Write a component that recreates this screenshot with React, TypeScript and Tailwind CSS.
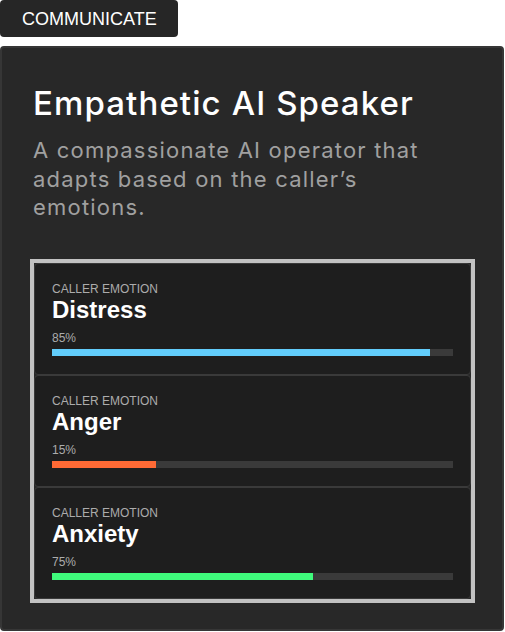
import React from "react";

const rows = [
  { name: "Distress", pct: "85%", fill: 94.3, color: "bg-[#62cdfb]" },
  { name: "Anger", pct: "15%", fill: 25.9, color: "bg-[#ff6a35]" },
  { name: "Anxiety", pct: "75%", fill: 65.1, color: "bg-[#3ffb7c]" },
];

export default function App() {
  return (
    <div className="w-[505px] h-[632px] bg-white flex flex-col overflow-hidden">
      <div className="w-[178px] h-[37px] bg-[#262626] rounded-[4px] flex items-center pl-[22px] text-white text-[18px] leading-none" style={{ fontFamily: '"Liberation Sans", Arial, sans-serif' }}>
        COMMUNICATE
      </div>
      <div className="mt-[9px] w-[504px] h-[585px] bg-[#282828] border-2 border-[#363636] rounded-[4px] px-[28px] pt-[36px] flex flex-col" style={{ fontFamily: 'Inter, "Noto Sans", sans-serif' }}>
        <h1 className="pl-[3px] text-white text-[33px] leading-[38.4px] font-medium tracking-[1.1px]">Empathetic AI Speaker</h1>
        <p className="pl-[3px] pr-[20px] mt-[14px] text-[#a0a0a0] text-[22px] leading-[28.4px] tracking-[1.2px]">
          A compassionate AI operator that adapts based on the caller’s emotions.
        </p>
        <div className="mt-[37px] w-[445px] border-4 border-[#c2c2c2] flex flex-col" style={{ fontFamily: '"Liberation Sans", Arial, sans-serif' }}>
          {rows.map((r) => (
            <div key={r.name} className="h-[112px] bg-[#1e1e1e] border border-[#3a3a3a] rounded-[4px] px-[17px] pt-[18px]">
              <div className="text-[12px] leading-[14px] text-[#acacac]">CALLER EMOTION</div>
              <div className="text-[24px] leading-[28px] font-bold text-white">{r.name}</div>
              <div className="mt-[7px] text-[12px] leading-[14px] text-[#acacac]">{r.pct}</div>
              <div className="mt-[4px] h-[7px] bg-[#3a3a3a] w-full">
                <div className={`h-full ${r.color}`} style={{ width: `${r.fill}%` }} />
              </div>
            </div>
          ))}
        </div>
      </div>
    </div>
  );
}
